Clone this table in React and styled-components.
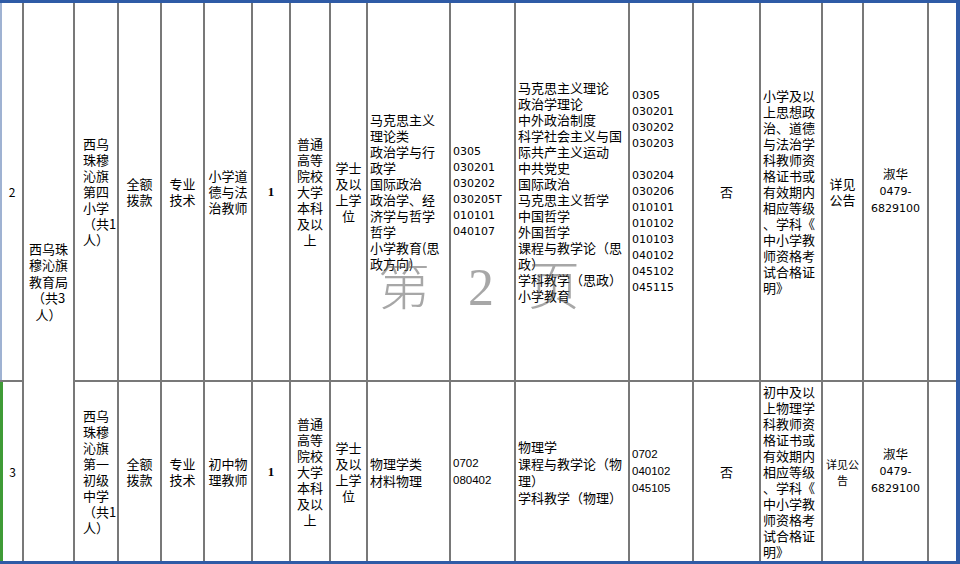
import React from "react";
import styled, { createGlobalStyle } from "styled-components";

const GlobalStyle = createGlobalStyle`
  html, body {
    margin: 0;
    padding: 0;
    background: #ffffff;
  }
  body {
    font-family: "Noto Sans CJK SC", "Noto Sans", sans-serif;
    color: #000000;
  }
`;

const Frame = styled.div`
  position: relative;
  width: 960px;
  height: 564px;
  box-sizing: border-box;
  border-top: 3px solid #2f5ba6;
  border-bottom: 3px solid #2f5ba6;
  border-right: 4px solid #2f5ba6;
  overflow: hidden;
`;

const Sheet = styled.div`
  display: grid;
  grid-template-columns:
    22px 49px 42px 41px 41px 46px 36px 38px 35px
    81px 63px 112px 62px 65px 60px 39px 63px 27px;
  grid-template-rows: 377px 179px;
  gap: 2px;
  height: 100%;
  background: #787878;
`;

const Cell = styled.div`
  display: flex;
  align-items: center;
  justify-content: ${(p) => (p.$align === "left" ? "flex-start" : "center")};
  box-sizing: border-box;
  padding-left: ${(p) => (p.$align === "left" ? p.$indent || 2 : 0)}px;
  background: #ffffff;
  font-size: ${(p) => p.$size || 13}px;
  line-height: ${(p) => p.$lh || 16}px;
  text-align: ${(p) => (p.$align === "left" ? "left" : "center")};
  white-space: pre;
  overflow: hidden;
  border-left: ${(p) => p.$edge || "none"};
  grid-row: ${(p) => (p.$rows ? `span ${p.$rows}` : "auto")};
`;

const Count = styled.span`
  font-family: "Liberation Serif", serif;
  font-weight: 700;
  font-size: 13px;
`;

const Codes = styled.span`
  font-family: ${(p) =>
    p.$compact
      ? `"Liberation Sans", "Noto Sans CJK SC", sans-serif`
      : `"DejaVu Sans", "Noto Sans CJK SC", sans-serif`};
  font-size: ${(p) => (p.$compact ? 11.5 : 11)}px;
  line-height: ${(p) => (p.$compact ? 17 : 16)}px;
`;

const Contact = styled.span`
  font-family: "DejaVu Sans", "Noto Sans CJK SC", sans-serif;
  font-size: 11px;
  line-height: 16.5px;
`;

const ContactName = styled.span`
  font-family: "Noto Sans CJK SC", sans-serif;
  font-size: 12.5px;
`;

const Watermark = styled.div`
  position: absolute;
  left: 378px;
  top: 254px;
  display: flex;
  align-items: baseline;
  gap: 38px;
  font-size: 52px;
  line-height: 1;
  color: rgba(95, 95, 95, 0.55);
  pointer-events: none;
`;

const WatermarkWord = styled.span`
  font-family: "Noto Sans CJK SC", sans-serif;
  font-weight: 300;
`;

const WatermarkNumber = styled.span`
  font-family: "Liberation Serif", serif;
  margin-right: -4px;
`;

const rows = [
  {
    no: "2",
    edge: "2px solid #9fb2d2",
    unit: "西乌\n珠穆\n沁旗\n第四\n小学\n（共1\n人）",
    post: "小学道\n德与法\n治教师",
    major:
      "马克思主义\n理论类\n政治学与行\n政学\n国际政治\n政治学、经\n济学与哲学\n哲学\n小学教育(思\n政方向)",
    majorCodes: "0305\n030201\n030202\n030205T\n010101\n040107",
    graduate:
      "马克思主义理论\n政治学理论\n中外政治制度\n科学社会主义与国\n际共产主义运动\n中共党史\n国际政治\n马克思主义哲学\n中国哲学\n外国哲学\n课程与教学论（思\n政）\n学科教学（思政）\n小学教育",
    graduateCodes:
      "0305\n030201\n030202\n030203\n\n030204\n030206\n010101\n010102\n010103\n040102\n045102\n045115",
    certificate:
      "小学及以\n上思想政\n治、道德\n与法治学\n科教师资\n格证书或\n有效期内\n相应等级\n、学科《\n中小学教\n师资格考\n试合格证\n明》",
    notice: "详见\n公告",
    compact: false,
  },
  {
    no: "3",
    edge: "3px solid #3f9b36",
    unit: "西乌\n珠穆\n沁旗\n第一\n初级\n中学\n（共1\n人）",
    post: "初中物\n理教师",
    major: "物理学类\n材料物理",
    majorCodes: "0702\n080402",
    graduate: "物理学\n课程与教学论（物\n理）\n学科教学（物理）",
    graduateCodes: "0702\n040102\n045105",
    certificate:
      "初中及以\n上物理学\n科教师资\n格证书或\n有效期内\n相应等级\n、学科《\n中小学教\n师资格考\n试合格证\n明》",
    notice: "详见公\n告",
    compact: true,
  },
];

const App = () => {
  return (
    <>
      <GlobalStyle />
      <Frame>
        <Sheet>
          {rows.map((row, index) => (
            <React.Fragment key={row.no}>
              <Cell $edge={row.edge} $size={12}>
                {row.no}
              </Cell>
              {index === 0 && (
                <Cell $rows={2} $lh={16.5}>
                  {"西乌珠\n穆沁旗\n教育局\n（共3\n人）"}
                </Cell>
              )}
              <Cell $align="left" $indent={8}>
                {row.unit}
              </Cell>
              <Cell>{"全额\n拨款"}</Cell>
              <Cell>{"专业\n技术"}</Cell>
              <Cell>{row.post}</Cell>
              <Cell>
                <Count>1</Count>
              </Cell>
              <Cell>{"普通\n高等\n院校\n大学\n本科\n及以\n上"}</Cell>
              <Cell>{"学士\n及以\n上学\n位"}</Cell>
              <Cell $align="left" $lh={row.compact ? 17 : 16}>
                {row.major}
              </Cell>
              <Cell $align="left">
                <Codes $compact={row.compact}>{row.majorCodes}</Codes>
              </Cell>
              <Cell $align="left" $lh={row.compact ? 17 : 16}>
                {row.graduate}
              </Cell>
              <Cell $align="left">
                <Codes $compact={row.compact}>{row.graduateCodes}</Codes>
              </Cell>
              <Cell>否</Cell>
              <Cell $align="left">{row.certificate}</Cell>
              <Cell $size={row.compact ? 11 : 13}>{row.notice}</Cell>
              <Cell>
                <Contact>
                  <ContactName>淑华</ContactName>
                  {"\n0479-\n6829100"}
                </Contact>
              </Cell>
              <Cell />
            </React.Fragment>
          ))}
        </Sheet>
        <Watermark>
          <WatermarkWord>第</WatermarkWord>
          <WatermarkNumber>2</WatermarkNumber>
          <WatermarkWord>页</WatermarkWord>
        </Watermark>
      </Frame>
    </>
  );
};

export default App;
